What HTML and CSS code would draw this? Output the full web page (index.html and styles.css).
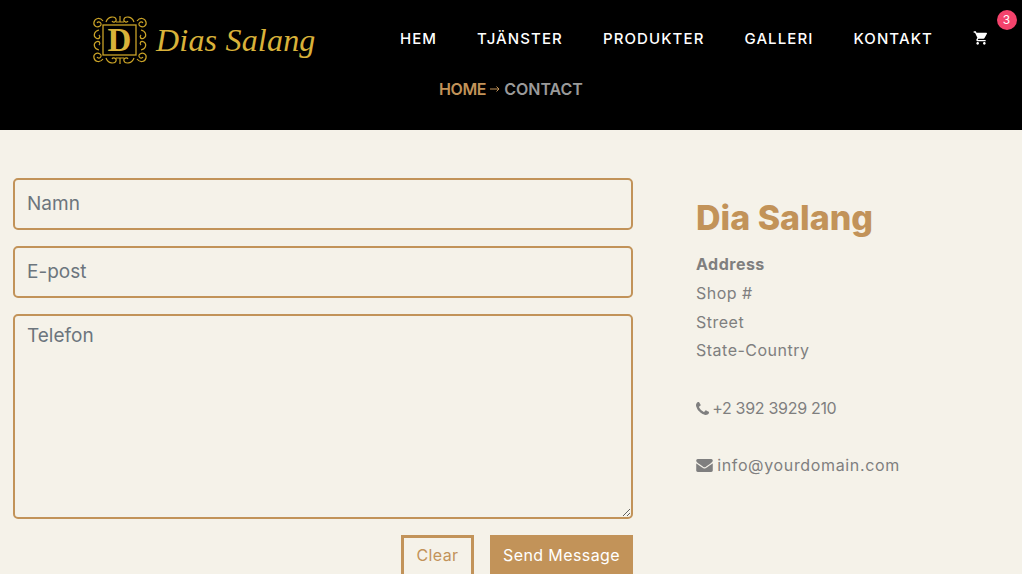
FILE: index.html
```html
<!DOCTYPE html>
<html lang="sv">
<head>
  <meta charset="UTF-8">
  <title>Dias Salang - Kontakt</title>
  <link rel="stylesheet" href="styles.css">
</head>
<body>

<header class="site-header">
  <div class="topbar">
    <a class="logo" href="#">
      <svg class="logo-mark" viewBox="0 0 56 50" width="56" height="50" fill="none" stroke="#c9a227" stroke-width="1.200">
        <rect x="11" y="10" width="33" height="30" stroke-width="1.300"/>
        <path d="M11 6c-3-4-8-3-9 1s3 6 6 4-1-6-3-3M45 6c3-4 8-3 9 1s-3 6-6 4 1-6 3-3"/>
        <path d="M11 44c-3 4-8 3-9-1s3-6 6-4-1 6-3 3M45 44c3 4 8 3 9-1s-3-6-6-4 1 6 3 3"/>
        <path d="M14 7c2-6 9-6 10-3s-3 4-4 2M42 7c-2-6-9-6-10-3s3 4 4 2M24 7h8M28 7V1"/>
        <path d="M14 43c2 6 9 6 10 3s-3-4-4-2M42 43c-2 6-9 6-10 3s3-4 4-2M24 43h8M28 43v6"/>
        <path d="M7 15c-5 1-6 6-3 8 3 2 5-1 3-3M7 35c-5-1-6-6-3-8 3-2 5 1 3 3M49 15c5 1 6 6 3 8-3 2-5-1-3-3M49 35c5-1 6-6 3-8-3-2-5 1-3 3"/>
      </svg>
      <span class="logo-letter">D</span>
      <span class="logo-name">Dias Salang</span>
    </a>
    <nav class="menu">
      <a href="#">HEM</a>
      <a href="#">TJÄNSTER</a>
      <a href="#">PRODUKTER</a>
      <a href="#">GALLERI</a>
      <a href="#">KONTAKT</a>
      <a class="cart" href="#">
        <svg viewBox="0 0 24 24" width="16" height="16" fill="#fff"><path d="M7 18c-1.100 0-2 .9-2 2s.9 2 2 2 2-.9 2-2-.9-2-2-2zM1 2v2h2l3.600 7.600-1.350 2.450c-.16.28-.25.61-.25.95 0 1.100.9 2 2 2h12v-2H7.420c-.14 0-.25-.11-.25-.25l.03-.12.9-1.630h7.450c.75 0 1.410-.41 1.750-1.030l3.580-6.490c.08-.14.12-.31.12-.48 0-.55-.45-1-1-1H5.210l-.94-2H1zm16 16c-1.100 0-2 .9-2 2s.9 2 2 2 2-.9 2-2-.9-2-2-2z"/></svg>
        <span class="badge">3</span>
      </a>
    </nav>
  </div>
  <p class="breadcrumb">
    <a href="#">HOME</a>
    <svg viewBox="0 0 10 8" width="10" height="8" fill="none" stroke="#c29359"><path d="M0 4h9M6.500 1.500 9 4 6.500 6.500"/></svg>
    <span>CONTACT</span>
  </p>
</header>

<main class="content">
  <form class="contact-form">
    <input type="text" placeholder="Namn">
    <input type="email" placeholder="E-post">
    <textarea placeholder="Telefon"></textarea>
    <div class="actions">
      <button type="reset" class="btn-clear">Clear</button>
      <button type="button" class="btn-send">Send Message</button>
    </div>
  </form>

  <aside class="info">
    <h2>Dia Salang</h2>
    <p>
      <b>Address</b><br>
      Shop #<br>
      Street<br>
      State-Country
    </p>
    <p class="phone">
      <svg viewBox="0 0 1408 1408" width="13" height="13" fill="#7f7f7f"><path d="M1408 1112q0 27-10 70.500t-21 68.500q-21 50-122 106-94 51-186 51-27 0-53-3.500t-57.500-12.500-47-14.500-55.500-20.500-49-18q-98-35-175-83-127-79-264-216t-216-264q-48-77-83-175-3-9-18-49t-20.500-55.500-14.500-47-12.500-57.500-3.500-53q0-92 51-186 56-101 106-122 25-11 68.500-21t70.500-10q14 0 21 3 18 6 53 76 11 19 30 54t35 63.500 31 53.500q3 4 17.500 25t21.500 35.500 7 28.500q0 20-28.500 50t-62 55-62 53-28.500 46q0 9 5 22.500t8.500 20.500 14 24 11.500 19q76 137 174 235t235 174q2 1 19 11.500t24 14 20.500 8.500 22.500 5q18 0 46-28.500t53-62 55-62 50-28.500q14 0 28.500 7t35.500 21.500 25 17.500q25 15 53.500 31t63.500 35 54 30q70 35 76 53 3 7 3 21z"/></svg>
      +2 392 3929 210
    </p>
    <p class="email">
      <svg viewBox="0 0 1792 1408" width="17" height="13" fill="#7f7f7f"><path d="M1792 454v794q0 66-47 113t-113 47H160q-66 0-113-47T0 1248V454q44 49 101 87 362 246 497 345 57 42 92.500 65.500t94.500 48 110 24.500h2q51 0 110-24.500t94.500-48 92.500-65.500q170-123 498-345 57-39 100-87zm0-294q0 79-49 151t-122 123q-376 261-468 325-10 7-42.500 30.500t-54 38-52 32.500-57.500 27-50 9h-2q-23 0-50-9t-57.500-27-52-32.500-54-38T639 759q-91-64-262-182.500T172 434q-62-42-117-115.500T0 182q0-78 41.500-130T160 0h1472q65 0 112.500 47t47.500 113z"/></svg>
      info@yourdomain.com
    </p>
  </aside>
</main>

</body>
</html>
```

FILE: styles.css
```css
html, body {
  height: 574px;
  overflow: hidden;
}

body {
  font-family: Inter, 'Open Sans', sans-serif;
  background-color: #f5f2e9;
  margin: 0;
  padding: 0;
  color: #7f7f7f;
}

a {
  text-decoration: none;
}

.site-header {
  background-color: #000;
  height: 130px;
  box-sizing: border-box;
  padding-top: 13px;
}

.topbar {
  display: flex;
  justify-content: space-between;
  align-items: center;
  height: 50px;
  padding: 0 33px 0 92px;
}

.logo {
  position: relative;
  display: flex;
  align-items: center;
  gap: 8px;
  margin-top: 4px;
}

.logo-letter {
  position: absolute;
  left: 0;
  width: 55px;
  text-align: center;
  font-family: 'Liberation Serif', serif;
  font-size: 33px;
  font-weight: bold;
  color: #d9b23a;
}

.logo-name {
  font-family: 'Liberation Serif', serif;
  font-style: italic;
  font-size: 32px;
  letter-spacing: 0.2px;
  color: #d9b23a;
}

.menu {
  display: flex;
  align-items: center;
  gap: 40px;
}

.menu a {
  color: #fff;
  font-size: 15px;
  font-weight: 500;
  letter-spacing: 1.1px;
}

.cart {
  position: relative;
  display: flex;
}

.badge {
  position: absolute;
  top: -20px;
  left: 24px;
  width: 20px;
  height: 20px;
  line-height: 20px;
  border-radius: 50%;
  background-color: #f4436c;
  text-align: center;
  font-size: 12px;
  font-weight: 400;
}

.breadcrumb {
  display: flex;
  justify-content: center;
  align-items: center;
  gap: 4px;
  margin: 16px 0 0;
  font-size: 16px;
  font-weight: 600;
  color: #9a9a9a;
}

.breadcrumb a {
  color: #c29359;
  letter-spacing: -0.4px;
}

.content {
  display: flex;
  padding: 48px 0 0 13px;
}

.contact-form {
  width: 620px;
  display: flex;
  flex-direction: column;
  gap: 16px;
  flex-shrink: 0;
}

input, textarea {
  box-sizing: border-box;
  width: 100%;
  padding: 0 12px;
  border: 2px solid #c29359;
  border-radius: 5px;
  background: transparent;
  font-family: inherit;
  font-size: 19px;
  color: #6c757d;
}

input {
  height: 52px;
  padding-bottom: 2px;
}

textarea {
  display: block;
  height: 205px;
  padding-top: 8px;
  resize: vertical;
}

input::placeholder, textarea::placeholder {
  color: #6c757d;
  opacity: 1;
}

.actions {
  display: flex;
  justify-content: flex-end;
  gap: 16px;
}

button {
  box-sizing: border-box;
  height: 48px;
  padding: 0 0 8px;
  font-family: inherit;
  font-size: 16px;
  letter-spacing: 0.4px;
  border: 3px solid #c29359;
  cursor: pointer;
}

.btn-clear {
  width: 73px;
  background: transparent;
  color: #c29359;
}

.btn-send {
  width: 143px;
  background-color: #c29359;
  color: #fff;
}

.info {
  margin-left: 63px;
  padding-top: 17px;
}

.info h2 {
  margin: 0 0 10px;
  font-size: 34px;
  font-weight: 800;
  line-height: 45px;
  color: #c29359;
}

.info p {
  margin: 0 0 28.800px;
  font-size: 16px;
  line-height: 28.800px;
  letter-spacing: 0.5px;
}

.info .phone {
  margin-bottom: 28px;
  letter-spacing: -0.3px;
}

.info .email {
  letter-spacing: 0.65px;
}

.info svg {
  vertical-align: -1px;
  margin-right: -1px;
}

.info b {
  font-weight: 700;
}
```
